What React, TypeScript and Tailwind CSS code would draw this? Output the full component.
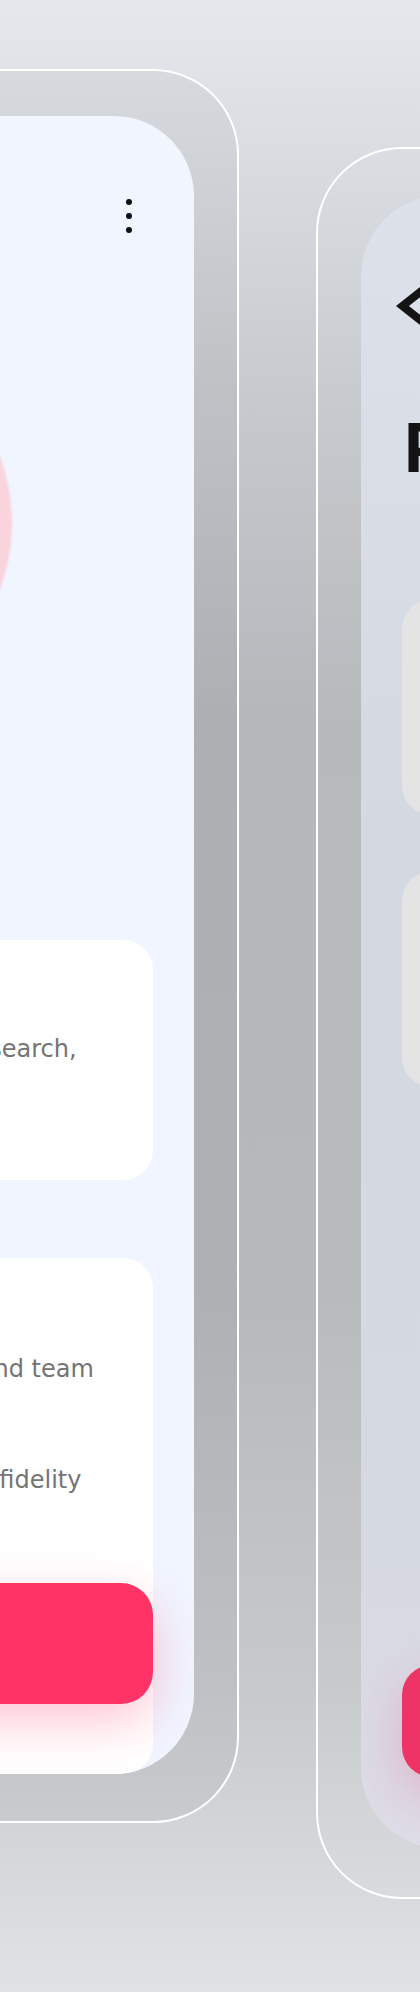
import React from 'react';

const Dots = () => (
  <div className="flex flex-col gap-[8px]">
    <span className="w-[6px] h-[6px] rounded-full bg-[#111]" />
    <span className="w-[6px] h-[6px] rounded-full bg-[#111]" />
    <span className="w-[6px] h-[6px] rounded-full bg-[#111]" />
  </div>
);

const ProfileScreen = () => (
  <div className="w-[832px] h-[1754px] shrink-0 mt-[69px] rounded-[86px] border-2 border-white bg-black/[0.04] pt-[45px] pr-[43px] pl-[43px] pb-[47px] flex flex-col">
    <div className="relative flex-1 flex flex-col rounded-[80px] bg-[#f0f5ff] overflow-hidden">
      <div className="flex justify-end pt-[83px] pr-[62px]">
        <Dots />
      </div>

      <div className="mt-[101px] mx-auto w-[378px] h-[378px] rounded-full bg-[#f9d4dd] blur-[1px]" />

      <div className="mx-[41px] mt-[228px] rounded-[30px] bg-white pt-[24px] pb-[38px] pl-[20px] pr-[32px]">
        <h3 className="text-[24px] leading-[30px] font-bold text-[#1a1a1a]">Discovery</h3>
        <p className="text-[24px] leading-[37px] text-[#747474] whitespace-nowrap">
          <span className="block">Mobile app for booking fitness</span>
          <span className="block">Led interviews, surveys and usability research,</span>
          <span className="block">personas and journey maps</span>
          <span className="block">for the first release.</span>
        </p>
      </div>

      <div className="flex-1 mx-[41px] mt-[78px] rounded-[30px] bg-white pt-[24px] pl-[29px] pr-[32px]">
        <h3 className="text-[24px] leading-[32px] font-bold text-[#1a1a1a]">Design process</h3>
        <p className="text-[24px] leading-[37px] text-[#9a9a9a]">Jan 2023 – Now</p>
        <p className="text-[24px] leading-[37px] text-[#747474] whitespace-nowrap">
          <span className="block">Collaborated closely with the product and team</span>
          <span className="block">to map user flows, sketch ideas,</span>
          <span className="block">build wireframes and then create</span>
          <span className="block">interactive prototypes from low to high fidelity</span>
        </p>
      </div>

      <button className="absolute left-[41px] right-[41px] bottom-[70px] h-[121px] rounded-[32px] bg-[#ff3366] shadow-[0_18px_50px_rgba(255,51,102,0.28)] text-white text-[26px] font-semibold">
        Contact me
      </button>
    </div>
  </div>
);

const ProjectsScreen = () => (
  <div className="w-[832px] h-[1752px] shrink-0 mt-[147px] rounded-[86px] border-2 border-white bg-white/[0.03] pt-[47px] pl-[43px] pr-[43px] pb-[49px] flex flex-col">
    <div className="relative flex-1 flex flex-col rounded-[80px] bg-[linear-gradient(180deg,#dde1ea_0%,#d4d9e1_40%,#d5d9e1_80%,#dedde8_100%)] overflow-hidden">
      <div className="pt-[87px] pl-[33px]">
        <svg width="30" height="46" viewBox="0 0 30 46">
          <polygon points="2,23 28,2.4 28,12.6 14.9,23 28,33.4 28,43.6" fill="#141414" />
        </svg>
      </div>

      <h1 className="mt-[84px] pl-[43px] font-['Inter',sans-serif] text-[68px] leading-none font-bold text-[#141414] whitespace-nowrap">
        Projects
      </h1>

      <div className="mt-[118px] mx-[41px] flex flex-col gap-[56px]">
        <div className="h-[216px] rounded-[30px] bg-[#e4e4e5]" />
        <div className="h-[216px] rounded-[30px] bg-[#e4e4e5]" />
      </div>

      <button className="absolute left-[41px] right-[41px] bottom-[71px] h-[112px] rounded-[30px] bg-[#ee3366] shadow-[0_18px_50px_rgba(238,51,102,0.25)] text-white text-[26px] font-semibold">
        Add project
      </button>
    </div>
  </div>
);

export default function App() {
  return (
    <div className="w-[420px] h-[1992px] overflow-hidden font-['DejaVu_Sans',sans-serif] bg-[linear-gradient(180deg,#e5e8ec_0%,#c6c9cd_20%,#b5b8bb_36%,#b6b9bc_65%,#c7cacd_85%,#e0e2e5_100%)]">
      <div className="flex items-start gap-[77px] -ml-[593px]">
        <ProfileScreen />
        <ProjectsScreen />
      </div>
    </div>
  );
}
